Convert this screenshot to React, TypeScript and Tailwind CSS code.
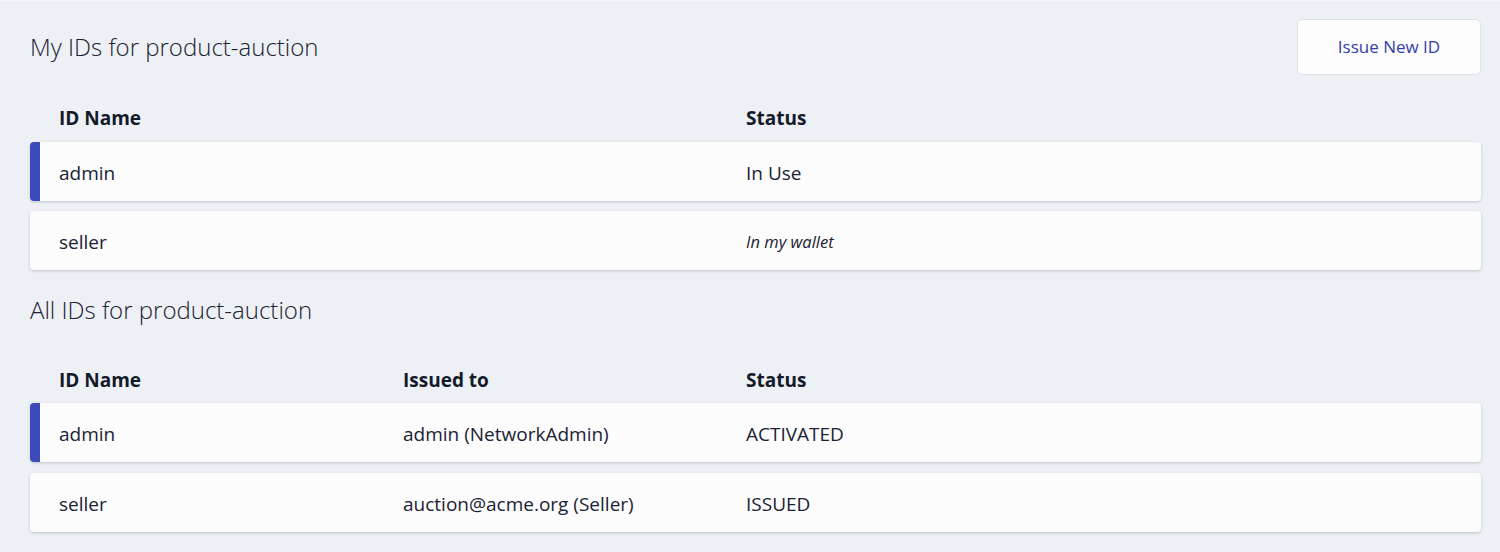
import React from "react";

const font = { fontFamily: '"Open Sans", "Noto Sans", sans-serif' };

function Row({ cells, active, italicLast }: { cells: string[]; active?: boolean; italicLast?: boolean }) {
  return (
    <div className="relative h-[59px] rounded-[4px] bg-[#fcfcfd] shadow-[0_1px_3px_rgba(30,40,60,0.22)] flex items-center overflow-hidden">
      {active && <div className="absolute left-0 top-0 bottom-0 w-[10px] bg-[#3d4ab9]" />}
      <div className="grid grid-cols-[344px_343px_1fr] pl-[29px] pt-[3px] w-full text-[19px] text-[#1a2233] items-center">
        {cells.map((c, i) => (
          <div key={i} className={italicLast && i === cells.length - 1 ? "italic text-[16.5px]" : ""}>
            {c}
          </div>
        ))}
      </div>
    </div>
  );
}

function Header({ cells }: { cells: string[] }) {
  return (
    <div className="grid grid-cols-[344px_343px_1fr] pl-[29px] text-[19px] font-bold text-[#131a2a] h-[22px] items-center">
      {cells.map((c, i) => (
        <div key={i}>{c}</div>
      ))}
    </div>
  );
}

export default function App() {
  return (
    <div style={font} className="w-[1500px] h-[552px] bg-[#edf0f4] border-t border-[#f4f6f9] px-[30px] overflow-hidden">
      <div className="w-[1451px]">
        <div className="flex items-center justify-between pt-[18px]">
          <h1 className="text-[24px] font-light text-[#1a2233] leading-none">My IDs for product-auction</h1>
          <button className="w-[184px] h-[56px] bg-[#fdfdfe] border border-[#dde2ea] rounded-[5px] text-[17px] text-[#3340a6]">
            Issue New ID
          </button>
        </div>
        <div className="mt-[29px]">
          <Header cells={["ID Name", "", "Status"]} />
        </div>
        <div className="mt-[16px] flex flex-col gap-[10px]">
          <Row cells={["admin", "", "In Use"]} active />
          <Row cells={["seller", "", "In my wallet"]} italicLast />
        </div>
        <h2 className="mt-[25px] text-[24px] font-light text-[#1a2233] leading-[30px]">All IDs for product-auction</h2>
        <div className="mt-[41px]">
          <Header cells={["ID Name", "Issued to", "Status"]} />
        </div>
        <div className="mt-[15px] flex flex-col gap-[11px]">
          <Row cells={["admin", "admin (NetworkAdmin)", "ACTIVATED"]} active />
          <Row cells={["seller", "auction@acme.org (Seller)", "ISSUED"]} />
        </div>
      </div>
    </div>
  );
}
